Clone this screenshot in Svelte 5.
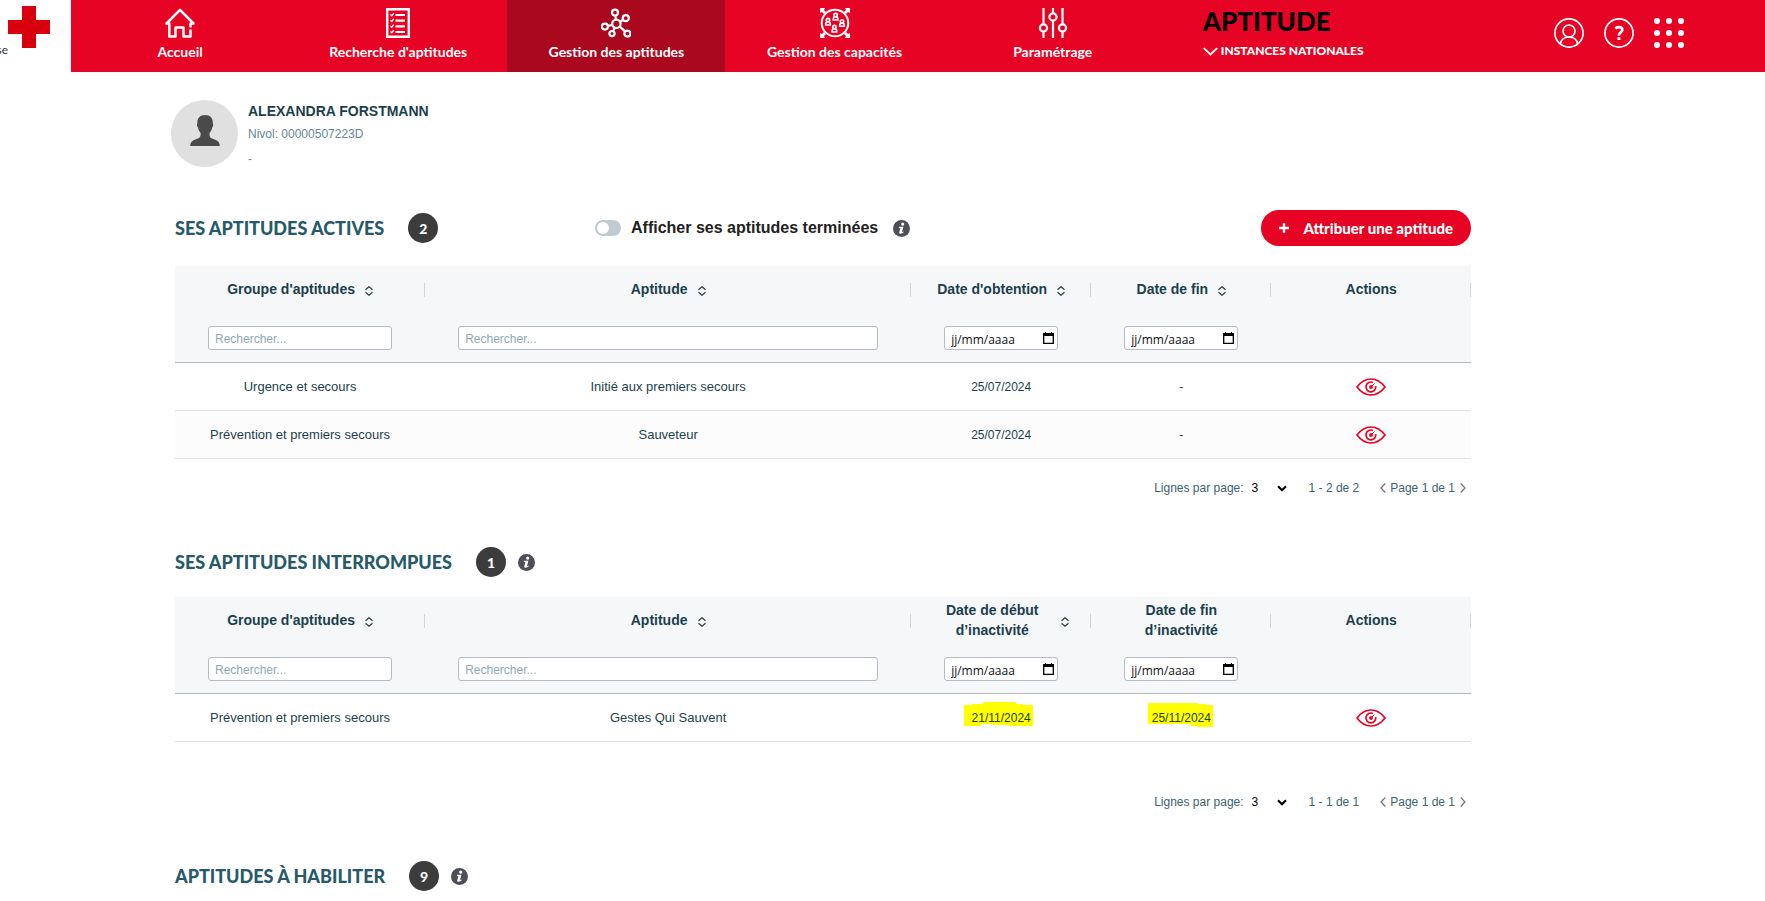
<script>
  const nav = [
    { label: 'Accueil', icon: 'home' },
    { label: "Recherche d'aptitudes", icon: 'list' },
    { label: 'Gestion des aptitudes', icon: 'network', active: true },
    { label: 'Gestion des capacités', icon: 'group' },
    { label: 'Paramétrage', icon: 'sliders' }
  ];

  const sections = [
    {
      id: 'actives',
      title: 'SES APTITUDES ACTIVES',
      count: 2,
      toggle: true,
      columns: [
        { label: "Groupe d'aptitudes", sort: true, filter: 'text' },
        { label: 'Aptitude', sort: true, filter: 'text' },
        { label: "Date d'obtention", sort: true, filter: 'date' },
        { label: 'Date de fin', sort: true, filter: 'date' },
        { label: 'Actions' }
      ],
      rows: [
        ['Urgence et secours', 'Initié aux premiers secours', '25/07/2024', '-'],
        ['Prévention et premiers secours', 'Sauveteur', '25/07/2024', '-']
      ],
      range: '1 - 2 de 2'
    },
    {
      id: 'interrompues',
      title: 'SES APTITUDES INTERROMPUES',
      count: 1,
      info: true,
      spaced: true,
      marked: true,
      columns: [
        { label: "Groupe d'aptitudes", sort: true, filter: 'text' },
        { label: 'Aptitude', sort: true, filter: 'text' },
        { label: 'Date de début d’inactivité', sort: true, filter: 'date' },
        { label: 'Date de fin d’inactivité', filter: 'date' },
        { label: 'Actions' }
      ],
      rows: [['Prévention et premiers secours', 'Gestes Qui Sauvent', '21/11/2024', '25/11/2024']],
      range: '1 - 1 de 1'
    },
    { id: 'habiliter', title: 'APTITUDES À HABILITER', count: 9, info: true }
  ];

  // Outlines of the highlighter strokes behind the two inactivity dates.
  const strokes = {
    2: '0,3 8,3 8,2 19,2 19,0 52,0 52,2 59,2 59,3 69,3 69,24 46,24 46,23 29,23 29,22 17,22 17,24 0,24',
    3: '4,1 54,1 54,2 62,2 62,3 69,3 69,25 53,25 53,24 47,24 47,22 4,22'
  };
</script>

{#snippet infoIcon()}
  <svg class="info" viewBox="0 0 17 17" aria-hidden="true">
    <circle cx="8.5" cy="8.5" r="8.5" fill="#4e4e59" />
    <circle cx="9.7" cy="4.1" r="1.6" fill="#fff" />
    <path d="M6 6.700H10.400L9 12Q9.600 12.300 10.800 11.600L10.500 12.600Q8.800 14.200 6.600 13.600 6 13.300 6.200 12.400L7.400 7.900H5.800Z" fill="#fff" />
  </svg>
{/snippet}

{#snippet navIcon(name)}
  <svg class="nav-icon" viewBox="0 0 30 30" fill="none" stroke="#fff" stroke-width="2.2" aria-hidden="true">
    {#if name === 'home'}
      <path d="M4.300 16V28.500H10.500V19.500H18.500V28.500H25.500V22.500M25.500 18.500V15.500H28.500L15 1.800 1.500 15.500H4.300" stroke-width="2.500" stroke-linejoin="round" stroke-linecap="round" />
    {:else if name === 'list'}
      <path d="M4.200 1.200H25.800V28.800H4.200Z" stroke-width="2.400" />
      <path d="M12.500 7H22M12.500 12.700H22M12.500 18.400H22M12.500 24H22" />
      <path d="m7.500 6.500 1.300 1.300 2-2.600M7.500 12.200l1.300 1.300 2-2.600M7.500 17.900l1.300 1.300 2-2.600M7.500 23.500l1.300 1.300 2-2.600" stroke-width="1.400" />
    {:else if name === 'network'}
      <circle cx="15.400" cy="15.800" r="4.200" />
      <circle cx="14" cy="4.600" r="3" /><circle cx="24.800" cy="10.200" r="3" />
      <circle cx="3.900" cy="18.600" r="3" /><circle cx="11" cy="25.600" r="2.600" />
      <circle cx="26.400" cy="25.600" r="3" />
      <path d="M14.400 7.600 14.900 11.700M19 13.800l3.200-2M11.400 17l-4.600.9M13.800 19.500l-1.700 3.700M18.600 18.400l5.400 5" />
    {:else if name === 'group'}
      <circle cx="15" cy="15" r="13.300" stroke-width="2" />
      <path d="M0 0h5L4 2l2 2-2 2-2-2-2 1zM30 0h-5l1 2-2 2 2 2 2-2 2 1zM0 30h5l-1-2 2-2-2-2-2 2-2-1zM30 30h-5l1-2-2-2 2-2 2 2 2-1z" fill="#fff" stroke="none" />
      {#each [[15.6, 9], [8, 14], [22, 15.3], [14.4, 21]] as [x, y]}
        <circle cx={x} cy={y - 1.9} r="1.700" stroke-width="1.600" />
        <path d="M{x - 2.3} {y + 3}v-1q0-2.200 2.300-2.200t2.300 2.200v1z" stroke-width="1.600" />
      {/each}
    {:else}
      <path d="M5.500 0V16M5.500 24V30M15 0V5M15 13V30M24.500 0V16M24.500 24V30" />
      <circle cx="5.500" cy="20" r="3.600" /><circle cx="15" cy="9" r="3.600" /><circle cx="24.500" cy="20" r="3.600" />
    {/if}
  </svg>
{/snippet}

<header>
  <a class="logo" href="#accueil" aria-label="Accueil">
    <span>se</span>
    <svg viewBox="0 0 42 42" aria-hidden="true"><path d="M14 0H28V14H42V28H28V42H14V28H0V14H14Z" fill="#d8000c" /></svg>
  </a>
  <nav>
    {#each nav as item}
      <a href="#{item.icon}" class:active={item.active}>
        {@render navIcon(item.icon)}
        <span>{item.label}</span>
      </a>
    {/each}
  </nav>
  <div class="context">
    <strong>APTITUDE</strong>
    <button>
      <svg width="15" height="9" viewBox="0 0 15 9" aria-hidden="true"><path d="M.8 1.200 7.500 7.500 14.200 1.200" fill="none" stroke="#fff" stroke-width="1.800" /></svg>
      INSTANCES NATIONALES
    </button>
  </div>
  <div class="tools">
    <button aria-label="Mon compte">
      <svg viewBox="0 0 30 30" fill="none" stroke="#fff" stroke-width="1.700" aria-hidden="true">
        <circle cx="15" cy="15" r="14.100" /><circle cx="15" cy="13" r="6" />
        <path d="M6.400 26q1.200-7 8.600-7t8.600 7" />
      </svg>
    </button>
    <button aria-label="Aide">
      <svg viewBox="0 0 30 30" fill="none" stroke="#fff" aria-hidden="true">
        <circle cx="15" cy="15" r="14.100" stroke-width="1.700" />
        <path d="M11.300 10.300q1.800-1.200 3.800-1.200 3.200 0 3.200 2.600 0 1.400-1.600 2.600-1.800 1.200-1.800 3.200" stroke-width="2.700" />
        <path d="M13.500 19.200h2.900v2.800h-2.900z" fill="#fff" stroke="none" />
      </svg>
    </button>
    <button aria-label="Applications">
      <svg viewBox="0 0 30 30" fill="#fff" aria-hidden="true">
        {#each [3, 15, 27] as y}{#each [3, 15, 27] as x}<circle cx={x} cy={y} r="3" />{/each}{/each}
      </svg>
    </button>
  </div>
</header>

<main>
  <div class="profile">
    <svg class="avatar" viewBox="0 0 67 67" aria-hidden="true">
      <circle cx="33.500" cy="33.500" r="33.500" fill="#e0e0e0" />
      <path d="M34 15c5.500 0 8 3.500 7.800 8 .8 1 .5 3.500-.6 4.500-.5 2.600-1.400 4-2.600 5.500-.3 3 .2 4.600 2.400 5.400 4.500 1.600 7.600 2.400 7.800 7.600H19.200c.2-5.200 3.300-6 7.800-7.600 2.200-.8 2.900-2.400 2.600-5.400-1.200-1.500-2.100-2.900-2.600-5.500-1.100-1-1.400-3.500-.6-4.500-.2-5 2.600-8 7.600-8z" fill="#4a4a4a" />
    </svg>
    <div>
      <h1>ALEXANDRA FORSTMANN</h1>
      <p>Nivol: 00000507223D</p>
      <p>-</p>
    </div>
  </div>

  {#each sections as section}
    <section>
      <div class="head">
        <div class="title">
          <h2>{section.title}</h2>
          <span class="badge">{section.count}</span>
          {#if section.info}{@render infoIcon()}{/if}
        </div>
        {#if section.toggle}
          <label class="toggle">
            <input type="checkbox" />
            <span>Afficher ses aptitudes terminées</span>
            {@render infoIcon()}
          </label>
          <button class="primary">
            <svg width="10" height="10" viewBox="0 0 10 10" aria-hidden="true"><path d="M5 0V10M0 5H10" stroke="#fff" stroke-width="2.400" /></svg>
            Attribuer une aptitude
          </button>
        {/if}
      </div>

      {#if section.rows}
        <table>
          <colgroup>
            <col class="c-group" /><col class="c-name" /><col class="c-date" /><col class="c-date" /><col class="c-actions" />
          </colgroup>
          <thead>
            <tr class="labels">
              {#each section.columns as col}
                <th scope="col">
                  <div>
                    <span>{col.label}</span>
                    {#if col.sort}
                      <svg width="8" height="10" viewBox="0 0 8 10" fill="none" stroke="#2b3d45" stroke-width="1.200" aria-hidden="true"><path d="M.5 3.700 4 .7 7.500 3.700M.5 6.300 4 9.300 7.500 6.300" /></svg>
                    {/if}
                  </div>
                </th>
              {/each}
            </tr>
            <tr class="filters">
              {#each section.columns as col}
                <td>
                  {#if col.filter}
                    <div class="field">
                      <input
                        type="text"
                        class:date={col.filter === 'date'}
                        aria-label={col.label}
                        placeholder={col.filter === 'date' ? 'jj/mm/aaaa' : 'Rechercher...'}
                      />
                      {#if col.filter === 'date'}
                        <svg width="11" height="12" viewBox="0 0 11 12" aria-hidden="true"><path d="M.7 2H10.300V11.300H.7Z" fill="none" stroke="#000" stroke-width="1.300" /><path d="M0 1H2V0H3V1H8V0H9V1H11V4H0Z" /></svg>
                      {/if}
                    </div>
                  {/if}
                </td>
              {/each}
            </tr>
          </thead>
          <tbody>
            {#each section.rows as row}
              <tr>
                {#each row as cell, i}
                  <td class:day={i > 1}>
                    {#if section.marked && strokes[i]}
                      <span class="marked">
                        <svg width="69" height="25" viewBox="0 0 69 25" aria-hidden="true"><polygon points={strokes[i]} fill="#ff0" /></svg>
                        <span>{cell}</span>
                      </span>
                    {:else}{cell}{/if}
                  </td>
                {/each}
                <td>
                  <button class="view" aria-label="Voir">
                    <svg width="30" height="18" viewBox="0 0 30 18" fill="none" stroke="#e60323" stroke-width="1.700" aria-hidden="true">
                      <path d="M1 9Q7 1 15 1T29 9Q23 17 15 17T1 9Z" />
                      <path d="M17 4.500A4.900 4.900 0 1 0 19.700 8" />
                      <circle cx="15" cy="9" r="1.900" fill="#e60323" stroke="none" />
                      <path d="M16 8 18.500 5.500" stroke-width="1" />
                    </svg>
                  </button>
                </td>
              </tr>
            {/each}
          </tbody>
        </table>

        <div class="pager" class:spaced={section.spaced}>
          <label for="size-{section.id}">Lignes par page:</label>
          <span class="size">
            <select id="size-{section.id}"><option>3</option><option>5</option><option>10</option></select>
            <svg width="10" height="7" viewBox="0 0 10 7" aria-hidden="true"><path d="M1 1.300 5 5.300 9 1.300" fill="none" stroke="#000" stroke-width="2" /></svg>
          </span>
          <span class="range">{section.range}</span>
          <button aria-label="Page précédente"><svg width="6" height="10" viewBox="0 0 6 10" aria-hidden="true"><path d="M5.300.5 1 5 5.300 9.500" fill="none" stroke="#777" stroke-width="1.300" /></svg></button>
          <span>Page 1 de 1</span>
          <button aria-label="Page suivante"><svg width="6" height="10" viewBox="0 0 6 10" aria-hidden="true"><path d="M.7.5 5 5 .7 9.500" fill="none" stroke="#777" stroke-width="1.300" /></svg></button>
        </div>
      {/if}
    </section>
  {/each}
</main>

<style>
  :global(body) {
    margin: 0;
    background: #fff;
    color: #1c3f4d;
    font-family: "Liberation Sans", Arial, sans-serif;
    font-size: 12px;
  }
  h1, h2, p { margin: 0; }
  button { border: 0; padding: 0; background: none; font: inherit; color: inherit; cursor: pointer; }
  svg { display: block; flex: none; }

  header {
    display: flex;
    height: 72px;
    background: #e60323;
    color: #fff;
    font-family: Lato, sans-serif;
  }
  .logo {
    display: flex;
    box-sizing: border-box;
    width: 71px;
    flex: none;
    padding-top: 6px;
    background: #fff;
    color: #333;
    text-decoration: none;
  }
  .logo span {
    display: flex;
    justify-content: flex-end;
    width: 8px;
    padding-top: 37px;
    font-size: 12px;
    line-height: 14px;
  }
  .logo svg { width: 42px; height: 42px; }
  nav { display: flex; flex: 1087 1 0; }
  nav a {
    display: flex;
    flex: 1;
    flex-direction: column;
    align-items: center;
    gap: 5px;
    padding-top: 8px;
    color: #fff;
    font-size: 14px;
    line-height: 18px;
    font-weight: 700;
    text-decoration: none;
    white-space: nowrap;
  }
  nav a.active { background: #aa081e; }
  .nav-icon { width: 30px; height: 30px; }
  .context {
    display: flex;
    flex: 350 1 0;
    flex-direction: column;
    align-items: flex-start;
    gap: 8px;
    padding: 9px 0 0 41px;
    box-sizing: border-box;
    white-space: nowrap;
  }
  .context strong { color: #000; font-size: 26px; line-height: 25px; font-weight: 900; }
  .context button { display: flex; align-items: center; gap: 3px; font-size: 12px; line-height: 18px; font-weight: 900; }
  .tools { display: flex; gap: 20px; padding: 18px 81px 0 0; align-items: flex-start; }
  .tools svg { width: 30px; height: 30px; }

  main { padding: 28px 294px 10px 175px; }
  .profile { display: flex; gap: 10px; margin: 0 0 38px -4px; }
  .avatar { width: 67px; height: 67px; }
  h1 { font-size: 14px; line-height: 22px; font-weight: 700; }
  p { color: #66858f; line-height: 25px; }

  .head { display: flex; align-items: center; margin-bottom: 20px; }
  .title { display: flex; align-items: center; flex: 0 0 420px; white-space: nowrap; }
  h2 { color: #275a69; font-family: Lato, sans-serif; font-size: 18px; line-height: 24px; font-weight: 900; }
  .badge {
    display: grid;
    place-items: center;
    width: 30px;
    height: 30px;
    margin: 0 12px 0 24px;
    border-radius: 50%;
    background: #3c3c3c;
    color: #fff;
    font-family: Lato, sans-serif;
    font-size: 14px;
    font-weight: 900;
  }
  .info { width: 17px; height: 17px; }
  .toggle { display: flex; align-items: center; gap: 10px; color: #222; font-size: 16px; font-weight: 700; white-space: nowrap; }
  .toggle .info { margin-left: 5px; }
  .toggle input {
    appearance: none;
    display: flex;
    align-items: center;
    width: 26px;
    height: 16px;
    margin: 0;
    padding: 2px;
    box-sizing: border-box;
    border-radius: 8px;
    background: #bfcbd1;
  }
  .toggle input::before { content: ''; width: 12px; height: 12px; border-radius: 50%; background: #fff; }
  .toggle input:checked { justify-content: flex-end; background: #275a69; }
  .primary {
    display: flex;
    align-items: center;
    justify-content: center;
    gap: 14px;
    height: 36px;
    margin-left: auto;
    padding: 0 18px;
    border-radius: 18px;
    background: #e60323;
    color: #fff;
    font-family: Lato, sans-serif;
    font-size: 15px;
    font-weight: 900;
    white-space: nowrap;
  }

  table { width: 100%; table-layout: fixed; border-collapse: separate; border-spacing: 0; text-align: center; }
  .c-group { width: 19.3%; }
  .c-name { width: 37.5%; }
  .c-date { width: 13.9%; }
  .c-actions { width: 15.4%; }
  thead { background: #f5f7f9; }
  th { position: relative; height: 46px; padding: 0 22px 2px; font-size: 14px; line-height: 20px; }
  th::after { content: ''; position: absolute; top: 17px; right: 0; width: 1px; height: 14px; background: #d3d7db; }
  th div { display: flex; align-items: center; justify-content: center; gap: 10px; }
  th svg { margin-top: 3px; }
  .filters td { height: 48px; padding: 0 33px; border-bottom: 1px solid #b4b9c4; }
  .field {
    display: flex;
    align-items: center;
    height: 24px;
    padding: 0 3px 0 6px;
    box-sizing: border-box;
    border: 1px solid #b7bbc7;
    border-radius: 3px;
    background: #fff;
  }
  .field input { flex: 1; min-width: 0; padding: 2px 0 0; border: 0; outline: 0; background: none; font: 12px "Liberation Sans", Arial, sans-serif; }
  .field input::placeholder { color: #8fa9b4; opacity: 1; }
  .field input.date { font: 12px "Open Sans", "Noto Sans", sans-serif; }
  .field input.date::placeholder { color: #111; }
  tbody td { height: 47px; padding: 0; border-bottom: 1px solid #dde1e9; font-size: 13px; }
  tbody td.day { font-size: 12px; }
  tbody tr:nth-child(even) { background: #fcfcfc; }
  .view { display: inline-block; vertical-align: middle; }
  .marked { display: inline-block; position: relative; }
  .marked svg { position: absolute; left: -8px; top: -9px; }
  .marked span { position: relative; color: #1c3f1c; }

  .pager {
    display: flex;
    align-items: center;
    justify-content: flex-end;
    height: 24px;
    margin: 17px 0 47px;
    padding-right: 5px;
    color: #3d626e;
    white-space: nowrap;
  }
  .pager.spaced { margin-top: 48px; }
  .size { display: flex; align-items: center; margin: 0 22px 0 8px; }
  .size select { appearance: none; width: 25px; padding: 0; border: 0; background: none; color: #000; font: inherit; }
  .size svg { pointer-events: none; }
  .range { margin-right: 21px; }
  .pager button { margin: 0 4px 0 0; }
  .pager button:last-child { margin: 0 0 0 5px; }
</style>
